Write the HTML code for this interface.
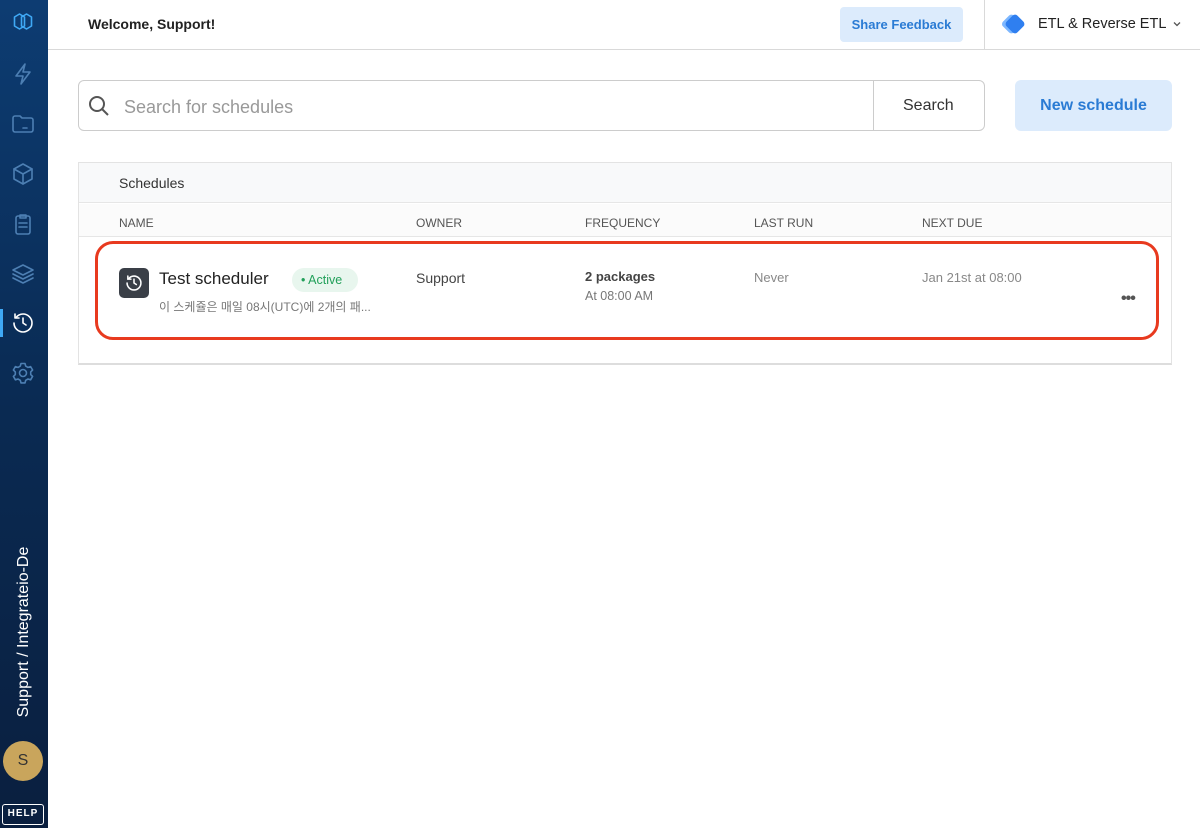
<!DOCTYPE html>
<html><head><meta charset="utf-8"><style>
*{box-sizing:border-box;margin:0;padding:0}
body{width:1200px;height:828px;overflow:hidden;font-family:"Liberation Sans","Noto Sans CJK KR",sans-serif;background:#fff;position:relative;color:#222}
.side{position:absolute;left:0;top:0;width:48px;height:828px;background:linear-gradient(#0d3c72,#0a2a52 50%,#0a1f3f)}
.ic{position:absolute;left:10px;width:26px;height:26px}
.ic svg{width:26px;height:26px;fill:none;stroke:#4d7fb3;stroke-width:1.6;stroke-linecap:round;stroke-linejoin:round}
.abs{position:absolute}
.hdr{position:absolute;left:48px;top:0;right:0;height:50px;border-bottom:1px solid #d9d9d9}
.th{position:absolute;top:216px;font-size:12px;color:#555}
</style></head><body>
<div class="side">
 <div class="ic" style="top:9px"><svg viewBox="0 0 26 26" style="stroke:#3fa9f5"><path d="M9.5 5l5 3v9l-5 3-5-3V8z"/><path d="M16.5 5l5 3v9l-5 3-5-3V8z"/></svg></div>
 <div class="ic" style="top:61px"><svg viewBox="0 0 26 26"><path d="M15 3L6 15h7l-2 8 9-12h-7z"/></svg></div>
 <div class="ic" style="top:111px"><svg viewBox="0 0 26 26"><path d="M3 7a2 2 0 012-2h5l2 2h9a2 2 0 012 2v10a2 2 0 01-2 2H5a2 2 0 01-2-2z"/><path d="M13 17h4"/></svg></div>
 <div class="ic" style="top:161px"><svg viewBox="0 0 26 26"><path d="M13 3l9 5v10l-9 5-9-5V8z"/><path d="M4 8l9 5 9-5M13 13v10"/></svg></div>
 <div class="ic" style="top:211px"><svg viewBox="0 0 26 26"><rect x="6" y="5" width="14" height="18" rx="2"/><path d="M10 4h6v3h-6zM9 12h8M9 16h8"/></svg></div>
 <div class="ic" style="top:261px"><svg viewBox="0 0 26 26"><path d="M13 4l10 5-10 5-10-5z"/><path d="M3 13l10 5 10-5M3 17l10 5 10-5"/></svg></div>
 <div style="position:absolute;left:0;top:309px;width:3px;height:28px;background:#3fa9f5"></div>
 <div class="ic" style="top:310px"><svg viewBox="0 0 26 26" style="stroke:#fff"><path d="M4 13a9 9 0 109-9 9 9 0 00-7 3.5"/><path d="M5 4v4h4M13 8v5l3 2"/></svg></div>
 <div class="ic" style="top:360px"><svg viewBox="0 0 26 26"><circle cx="13" cy="13" r="3.5"/><path d="M11 3.5h4l.7 2.6 2.3 1.3 2.6-.8 2 3.4-1.9 1.9v2.6l1.9 1.9-2 3.4-2.6-.8-2.3 1.3-.7 2.6h-4l-.7-2.6-2.3-1.3-2.6.8-2-3.4 1.9-1.9v-2.6L3.4 10l2-3.4 2.6.8 2.3-1.3z"/></svg></div>
 <div style="position:absolute;left:24px;top:632px;transform:translate(-50%,-50%) rotate(-90deg);white-space:nowrap;color:#fff;font-size:16px">Support / Integrateio-De</div>
 <div style="position:absolute;left:3px;top:741px;width:40px;height:40px;border-radius:50%;background:#c9a55c;color:#333;font-size:16px;text-align:center;line-height:40px">S</div>
 <div style="position:absolute;left:2px;top:804px;width:42px;height:21px;border:1.5px solid #fff;border-radius:3px;color:#fff;font-size:10px;font-weight:bold;text-align:center;line-height:18px;letter-spacing:1px">HELP</div>
</div>
<div class="hdr">
 <div class="abs" style="left:40px;top:16px;font-size:14px;font-weight:bold;color:#222">Welcome, Support!</div>
 <div class="abs" style="left:792px;top:7px;width:123px;height:35px;background:#dcebfc;border-radius:4px;color:#2a7bd4;font-size:13px;font-weight:bold;text-align:center;line-height:35px">Share Feedback</div>
 <div class="abs" style="left:936px;top:0;width:1px;height:49px;background:#d9d9d9"></div>
 <div class="abs" style="left:958px;top:15px;width:18px;height:18px;background:#2f7ff0;transform:rotate(45deg) scale(.85);border-radius:4px;box-shadow:-3px 3px 0 #7db7ff"></div>
 <div class="abs" style="left:990px;top:16px;font-size:14.5px;color:#222">ETL &amp; Reverse ETL</div>
 <svg class="abs" style="left:1124px;top:20px" width="10" height="8" viewBox="0 0 10 8" fill="none" stroke="#555" stroke-width="1.3"><path d="M2 2.5l3 3 3-3"/></svg>
</div>
<div class="abs" style="left:78px;top:80px;width:907px;height:51px;border:1px solid #ccc;border-radius:6px"></div>
<svg class="abs" style="left:88px;top:95px" width="22" height="22" viewBox="0 0 22 22" fill="none" stroke="#555" stroke-width="2"><circle cx="9" cy="9" r="7"/><path d="M14 14l6 6"/></svg>
<div class="abs" style="left:124px;top:97px;font-size:18px;color:#999">Search for schedules</div>
<div class="abs" style="left:873px;top:81px;width:1px;height:49px;background:#ccc"></div>
<div class="abs" style="left:903px;top:97px;font-size:16px;color:#333">Search</div>
<div class="abs" style="left:1015px;top:80px;width:157px;height:51px;background:#dcebfc;border-radius:6px;color:#2a7bd4;font-size:16px;font-weight:bold;text-align:center;line-height:51px">New schedule</div>
<div class="abs" style="left:78px;top:162px;width:1094px;height:203px;border:1px solid #e3e3e3;border-bottom:2px solid #ddd"></div>
<div class="abs" style="left:79px;top:163px;width:1092px;height:40px;background:#f8f9fa;border-bottom:1px solid #e6e6e6"></div>
<div class="abs" style="left:119px;top:175px;font-size:14px;color:#333">Schedules</div>
<div class="abs" style="left:79px;top:204px;width:1092px;height:33px;background:#fbfbfb;border-bottom:1px solid #e6e6e6"></div>
<div class="th" style="left:119px">NAME</div><div class="th" style="left:416px">OWNER</div><div class="th" style="left:585px">FREQUENCY</div><div class="th" style="left:754px">LAST RUN</div><div class="th" style="left:922px">NEXT DUE</div>
<div class="abs" style="left:95px;top:241px;width:1064px;height:99px;border:3px solid #e83a1f;border-radius:18px"></div>
<div class="abs" style="left:119px;top:268px;width:30px;height:30px;background:#3a3f47;border-radius:5px"></div>
<svg class="abs" style="left:124px;top:273px" width="20" height="20" viewBox="0 0 26 26" fill="none" stroke="#fff" stroke-width="2" stroke-linecap="round"><path d="M4 13a9 9 0 109-9 9 9 0 00-7 3.5"/><path d="M5 4v4h4M13 8v5l3 2"/></svg>
<div class="abs" style="left:159px;top:269px;font-size:17px;color:#222">Test scheduler</div>
<div class="abs" style="left:292px;top:268px;width:66px;height:24px;background:#e8f6ee;border-radius:12px;color:#22a05a;font-size:12.5px;line-height:24px;padding-left:9px">• Active</div>
<div class="abs" style="left:159px;top:298px;font-size:12px;color:#777">이 스케쥴은 매일 08시(UTC)에 2개의 패...</div>
<div class="abs" style="left:416px;top:270px;font-size:14px;color:#444">Support</div>
<div class="abs" style="left:585px;top:269px;font-size:13px;color:#444;font-weight:bold">2 packages</div>
<div class="abs" style="left:585px;top:289px;font-size:12.5px;color:#777">At 08:00 AM</div>
<div class="abs" style="left:754px;top:270px;font-size:13px;color:#888">Never</div>
<div class="abs" style="left:922px;top:270px;font-size:13px;color:#888">Jan 21st at 08:00</div>
<div class="abs" style="left:1121px;top:290px;font-size:16px;color:#555;font-weight:bold;letter-spacing:-1px">•••</div>
</body></html>
